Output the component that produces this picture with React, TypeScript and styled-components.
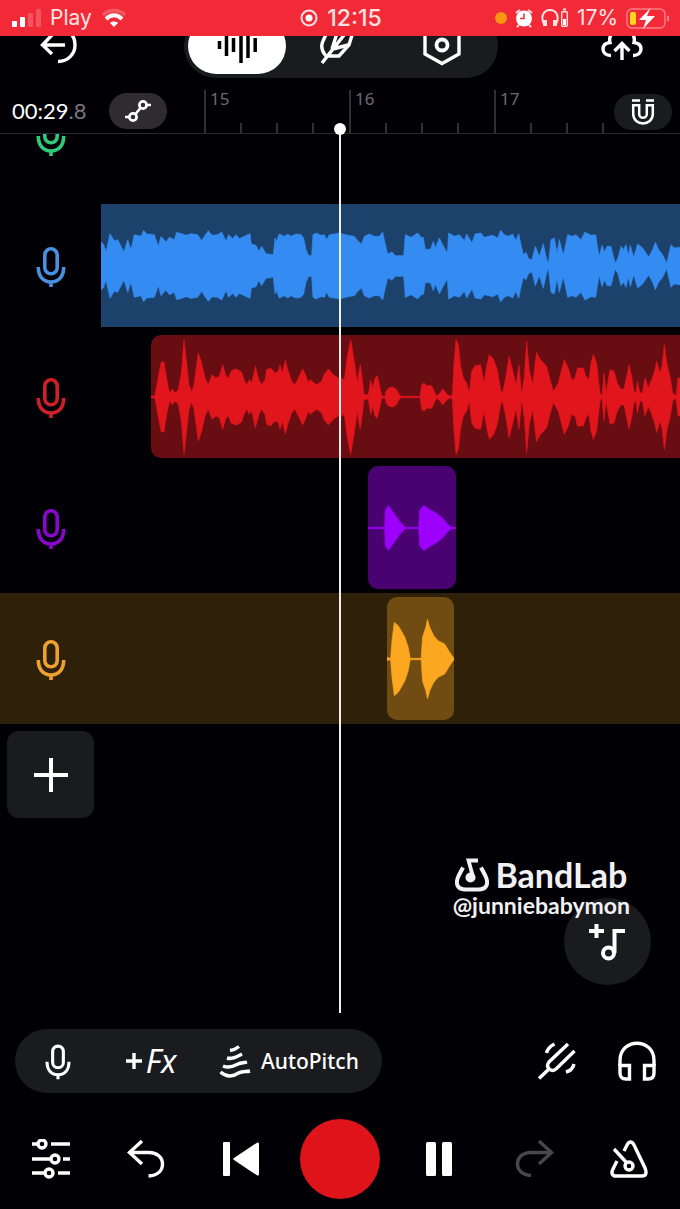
import React from "react";
import styled, { createGlobalStyle, css } from "styled-components";

const GlobalStyle = createGlobalStyle`
  *, *::before, *::after { box-sizing: border-box; }
  body { margin: 0; background: #010005; }
  button { appearance: none; border: 0; padding: 0; margin: 0; background: none; color: inherit; font: inherit; cursor: pointer; }
`;

const sans = `"Liberation Sans", Arial, sans-serif`;
const rounded = `Lato, "Open Sans", sans-serif`;

const Page = styled.main`
  display: flex;
  flex-direction: column;
  min-height: 100vh;
  background: #010005;
  color: #fff;
  font-family: ${rounded};
  overflow-x: hidden;
`;

/* ---------- status bar ---------- */

const StatusBar = styled.header`
  display: grid;
  grid-template-columns: 1fr auto 1fr;
  align-items: center;
  height: 36px;
  padding: 0 10px 0 12px;
  background: #f22a38;
  color: #ffe3e3;
  font-family: Inter, ${sans};
  font-size: 21px;
  line-height: 36px;
`;

const StatusGroup = styled.div<{ $end?: boolean; $gap: number }>`
  display: flex;
  align-items: center;
  justify-content: ${(p) => (p.$end ? "flex-end" : "flex-start")};
  gap: ${(p) => p.$gap}px;
`;

const Clock = styled.time`
  font-size: 23px;
  font-weight: 500;
`;

const Glyph = styled.svg.attrs({ strokeWidth: 3.4 })`
  display: block;
  flex: none;
  fill: none;
  stroke: currentColor;
`;

/* ---------- top navigation ---------- */

const TopBar = styled.nav`
  display: grid;
  grid-template-columns: 1fr auto 1fr;
  align-content: end;
  height: 42px;
  padding: 0 34px 0 36px;
  overflow: hidden;
`;

const ModeSwitch = styled.div`
  display: flex;
  align-items: center;
  height: 64px;
  padding: 4px;
  border-radius: 32px;
  background: #1a1b1e;
`;

const ModeButton = styled.button<{ $active?: boolean }>`
  display: grid;
  place-items: center;
  width: ${(p) => (p.$active ? 98 : 104)}px;
  height: 56px;
  border-radius: 28px;
  ${(p) => p.$active && css`background: #fff; color: #000;`}
`;

const NavButton = styled.button<{ $end?: boolean }>`
  display: grid;
  place-items: center;
  justify-self: ${(p) => (p.$end ? "end" : "start")};
  width: 48px;
  height: 64px;
`;

/* ---------- workspace ---------- */

const Workspace = styled.section`
  position: relative;
  display: flex;
  flex: 1;
  flex-direction: column;
`;

const RulerBar = styled.div`
  position: relative;
  display: flex;
  align-items: flex-end;
  height: 56px;
  border-bottom: 1px solid #2a2a2e;
  overflow: hidden;
`;

const TimePanel = styled.div`
  display: flex;
  flex: none;
  align-items: center;
  gap: 20px;
  width: 204px;
  height: 44px;
  padding-left: 12px;
`;

const TimeReadout = styled.output`
  width: 77px;
  font-size: 22px;
  line-height: 24px;
  white-space: nowrap;
`;

const Faded = styled.span`
  color: #77777c;
`;

const RoundToggle = styled.button<{ $muted?: boolean }>`
  display: grid;
  place-items: center;
  width: 58px;
  height: 36px;
  border-radius: 18px;
  background: ${(p) => (p.$muted ? "#1a1b1e" : "#2e2c30")};
`;

const SnapSlot = styled.div`
  position: absolute;
  right: 8px;
  bottom: 3px;
`;

const Bar = styled.div`
  display: flex;
  flex: none;
  justify-content: space-between;
  width: 145px;
  height: 43px;
  border-left: 2px solid #2f2f33;
  color: #6c6c71;
  font-family: "Noto Sans", sans-serif;
  font-size: 17px;
  line-height: 18px;
  padding-left: 4px;
`;

const Ticks = styled.div`
  display: grid;
  grid-template-columns: repeat(3, 2px);
  align-self: flex-end;
  gap: 34px;
  margin-right: 35px;
  height: 10px;
`;

const Tick = styled.i`
  background: #2f2f33;
`;

const BarNumber = styled.span`
  width: 0;
`;

const TrackList = styled.ul`
  margin: 0;
  padding: 0;
  list-style: none;
`;

const TrackRow = styled.li<{ $selected?: boolean; $cut?: boolean }>`
  display: flex;
  align-items: ${(p) => (p.$cut ? "flex-end" : "center")};
  height: ${(p) => (p.$cut ? 66 : 131)}px;
  overflow: hidden;
  background: ${(p) => (p.$selected ? "#2f200a" : "transparent")};
`;

const TrackHead = styled.button<{ $color: string }>`
  display: grid;
  flex: none;
  place-items: center;
  width: 101px;
  height: 131px;
  color: ${(p) => p.$color};
`;

const Lane = styled.div<{ $start: number }>`
  display: flex;
  flex: 1;
  padding-left: ${(p) => p.$start}px;
`;

const Clip = styled.div<{ $fill: string; $wave: string; $width?: number; $radius: string }>`
  flex: ${(p) => (p.$width ? `0 0 ${p.$width}px` : "1 1 0")};
  height: 123px;
  border-radius: ${(p) => p.$radius};
  background: ${(p) => p.$fill};
  color: ${(p) => p.$wave};
  overflow: hidden;
`;

const WaveDrawing = styled.svg`
  display: block;
  width: 100%;
  height: 100%;
  fill: currentColor;
  stroke: currentColor;
  stroke-width: 2;
`;

const AddTrack = styled.button`
  display: grid;
  place-items: center;
  width: 87px;
  height: 87px;
  margin: 7px;
  border-radius: 12px;
  background: #1a1b1e;
`;

const Playhead = styled.div`
  position: absolute;
  top: 51px;
  bottom: 0;
  left: 50%;
  width: 2px;
  margin-left: -1px;
  background: #f0f0f2;

  &::before {
    content: "";
    position: absolute;
    top: -6px;
    left: -5px;
    width: 12px;
    height: 12px;
    border-radius: 50%;
    background: #fff;
  }
`;

const AddLoop = styled.button`
  position: absolute;
  right: 29px;
  bottom: 28px;
  display: grid;
  place-items: center;
  width: 87px;
  height: 87px;
  border-radius: 50%;
  background: #1a1b1e;
`;

const Watermark = styled.div`
  position: absolute;
  right: 50px;
  bottom: 96px;
  display: flex;
  flex-direction: column;
  align-items: center;
  color: #f1f1f3;
`;

const Brand = styled.div`
  display: flex;
  align-items: center;
  gap: 6px;
  font-size: 34px;
  font-weight: 700;
  line-height: 36px;
`;

const Handle = styled.div`
  font-size: 23px;
  font-weight: 700;
  line-height: 24px;
`;

/* ---------- bottom controls ---------- */

const Controls = styled.footer`
  display: flex;
  flex-direction: column;
  gap: 26px;
  padding: 16px 15px 10px;
`;

const ToolRow = styled.div`
  display: flex;
  align-items: center;
  justify-content: space-between;
`;

const ToolPill = styled.div`
  display: flex;
  align-items: center;
  height: 64px;
  padding: 0 23px 0 18px;
  border-radius: 32px;
  background: #1a1b1e;
  font-family: "Noto Sans", sans-serif;
`;

const ToolButton = styled.button<{ $width?: number }>`
  display: flex;
  align-items: center;
  justify-content: center;
  gap: 10px;
  width: ${(p) => (p.$width ? `${p.$width}px` : "auto")};
  height: 64px;
  font-size: 21px;
  font-weight: 500;
  line-height: 24px;
`;

const FxText = styled.span`
  display: flex;
  align-items: center;
  gap: 4px;
  font-size: 32px;
  font-style: italic;
  font-weight: 400;
  line-height: 36px;
`;

const SideTools = styled.div`
  display: flex;
  gap: 32px;
  padding-right: 4px;
`;

const Transport = styled.div`
  display: flex;
  align-items: center;
  justify-content: space-between;
`;

const TransportButton = styled.button<{ $dim?: boolean }>`
  display: grid;
  place-items: center;
  width: 72px;
  height: 64px;
  color: ${(p) => (p.$dim ? "#48484c" : "#fff")};
`;

const IconButton = styled.button`
  display: grid;
  place-items: center;
  width: 48px;
  height: 64px;
`;

const RecordButton = styled.button`
  width: 80px;
  height: 80px;
  border-radius: 50%;
  background: #df141b;
`;

/* ---------- waveforms ---------- */

type Point = [number, number];

/* Upper outline of each clip, mirrored about the axis when drawn. */
const shift = (dx: number, points: Point[]): Point[] => points.map(([x, y]) => [x + dx, y]);

const blueWave: Point[] = [
  [35,142],[42,148],[50,172],[62,117],[75,138],[85,135],[104,172],[115,135],[125,165],[135,120],[155,125],[163,107],[172,118],[195,120],[207,155],[215,125],[230,142],[240,128],[255,135],[262,113],[280,118],[290,122],[305,117],[325,120],[337,138],[345,125],[357,108],[368,122],[385,120],[397,112],[410,140],[418,120],[430,132],[440,120],[450,132],[465,125],[482,117],[486,148],[500,152],[508,170],[517,155],[530,177],[552,180],[557,130],[560,142],[570,118],[585,125],[595,118],[605,125],[620,118],[635,120],[643,130],[650,165],[658,183],[667,183],[671,120],[680,115],[695,122],[705,120],[712,135],[720,120],[735,118],[750,115],[775,122],[795,125],[805,138],[817,148],[825,125],[840,118],[855,125],
  ...shift(870, [
    [0,125],[10,112],[16,140],[25,178],[38,172],[48,183],[73,183],[78,120],[95,128],[115,115],[128,130],[132,128],[138,165],[154,163],[162,140],[168,160],[180,130],[190,150],[204,175],[208,115],[225,125],[240,120],[255,138],[262,118],[278,145],[287,118],[305,115],[315,128],[340,122],[355,130],[364,107],[375,120],[388,125],[400,118],[410,138],[418,117],[425,150],[432,180],[440,173],[448,192],[458,195],[468,155],[480,185],[492,147],[500,185],[507,209],[515,135],[525,130],[533,175],[540,135],[552,182],[565,120],[580,125],[590,120],[605,135],[617,112],[635,122],[649,120],[655,160],[660,185],[668,152],[676,172],[683,155],[695,155],[702,185],[708,205],[716,190],[725,155],[732,165],[740,150],[747,182],[753,152],[763,188],[775,148],[790,160],[808,187],[820,165],[828,143],[838,165],[850,180],[862,206],[875,150],[885,160],[902,158],
  ] as Point[]),
];

const redWave: Point[] = [
  [33,200],[45,198],[50,170],[58,125],[64,97],[72,97],[76,125],[84,170],[90,190],[97,178],[105,190],[115,180],[124,130],[132,30],[140,100],[147,165],[155,187],[162,165],[168,120],[175,70],[185,100],[195,145],[205,165],[216,135],[228,145],[238,140],[248,105],[258,140],[265,145],[275,122],[290,118],[305,128],[312,150],[320,165],[328,150],[335,160],[346,110],[357,150],[365,165],[375,150],[380,120],[392,115],[405,130],[415,125],[420,105],[427,130],[436,92],[445,125],[455,155],[465,165],[475,145],[488,118],[498,140],[505,160],[510,150],[530,165],[545,155],[552,135],[565,118],[580,135],[595,145],[605,145],[613,150],[622,80],[632,30],[642,90],[652,160],[656,130],[661,105],[667,150],[672,194],[685,196],[692,150],[698,175],[705,145],[712,138],[718,165],[725,198],[735,200],[738,185],[746,175],[758,172],[768,178],[780,198],[785,200],
  ...shift(810, [
    [0,200],[30,200],[35,165],[42,160],[50,168],[65,168],[75,190],[80,200],[90,190],[98,178],[110,192],[120,200],[127,195],[132,100],[138,30],[145,45],[152,110],[160,145],[170,160],[178,190],[185,125],[195,108],[212,105],[222,160],[230,110],[238,75],[250,88],[262,120],[272,180],[278,190],[288,140],[297,80],[305,110],[318,165],[327,105],[335,195],[343,140],[350,35],[358,120],[368,165],[375,105],[380,68],[390,88],[410,110],[420,150],[430,185],[445,160],[455,120],[463,90],[475,115],[485,150],[495,145],[502,115],[520,115],[528,140],[537,150],[543,100],[550,75],[560,100],[570,190],[576,198],[582,130],[588,190],[595,150],[600,120],[612,125],[622,160],[632,178],[642,178],[650,140],[657,105],[665,140],[672,185],[678,190],[682,155],[690,190],[697,190],[705,145],[715,175],[725,150],[735,120],[740,95],[750,130],[756,110],[763,45],[772,110],[780,140],[788,190],[798,198],[804,145],[810,145],
  ] as Point[]),
];

const purpleWave: Point[] = [
  [54,201],[104,201],[106,148],[116,136],[125,150],[140,170],[150,185],[165,201],[206,201],[209,150],[222,135],[240,148],[262,160],[280,175],[292,190],[303,201],[318,201],
];

const orangeWave: Point[] = [
  [111,588],[114,592],[122,592],[126,540],[133,485],[145,495],[155,512],[165,530],[175,560],[181,593],[214,593],[218,530],[228,500],[233,476],[240,500],[252,525],[265,540],[285,550],[300,575],[313,593],
];

function Wave({ points, axis }: { points: Point[]; axis: number }) {
  const left = points[0][0];
  const width = points[points.length - 1][0] - left;
  const mid = 186;
  const top = points.map(([x, y]) => `${x - left} ${mid - (axis - y)}`);
  const bottom = [...points].reverse().map(([x, y]) => `${x - left} ${mid + (axis - y)}`);
  return (
    <WaveDrawing viewBox={`0 0 ${width} 369`} preserveAspectRatio="none" aria-hidden="true">
      <path d={`M${top.join("L")}L${bottom.join("L")}Z`} />
    </WaveDrawing>
  );
}

interface Track {
  name: string;
  color: string;
  selected?: boolean;
  clip?: { start: number; width?: number; fill: string; wave: string; radius: string; points: Point[]; axis: number };
}

const tracks: Track[] = [
  { name: "Green voice track", color: "#2fca7c" },
  {
    name: "Blue voice track",
    color: "#4a90e0",
    clip: { start: 0, fill: "#1c426c", wave: "#348cf3", radius: "0", points: blueWave, axis: 214 },
  },
  {
    name: "Red voice track",
    color: "#cf1f29",
    clip: { start: 50, fill: "#680d11", wave: "#e1151c", radius: "10px 0 0 10px", points: redWave, axis: 202 },
  },
  {
    name: "Purple voice track",
    color: "#8a06cf",
    clip: { start: 267, width: 88, fill: "#4a0172", wave: "#9d00fb", radius: "10px", points: purpleWave, axis: 203 },
  },
  {
    name: "Orange voice track",
    color: "#eda12e",
    selected: true,
    clip: { start: 286, width: 67, fill: "#714c12", wave: "#fba71f", radius: "10px", points: orangeWave, axis: 595 },
  },
];

/* ---------- icons ---------- */

const MicIcon = ({ width = 30, height = 44 }: { width?: number; height?: number }) => (
  <Glyph width={width} height={height} viewBox="0 0 30 44">
    <g strokeWidth="3.6">
      <rect x="8.800" y="4.800" width="12.400" height="25" rx="6.200" />
      <path d="M2.300 23c0 9 4.700 15 12.700 15s12.700-6 12.700-15M15 38v5" />
    </g>
  </Glyph>
);

const UndoIcon = () => (
  <Glyph width="40" height="40" viewBox="0 0 40 40">
    <path d="M16 2 3.500 13.500 16 25" />
    <path d="M4 13.500h19c8 0 13.500 5 13.500 11.500 0 7-5.500 11.500-14 12" />
  </Glyph>
);

const SlidersIcon = () => (
  <Glyph width="38" height="40" viewBox="0 0 38 40">
    <path d="M0 5h5M19 5h19M0 20h18M31 20h7M0 34h12M26 34h12" />
    <circle cx="10" cy="5" r="4" />
    <circle cx="23" cy="20" r="4" />
    <circle cx="17" cy="34" r="4" />
  </Glyph>
);

export default function App() {
  return (
    <Page>
      <GlobalStyle />

      <StatusBar>
        <StatusGroup $gap={8}>
          <Glyph width="30" height="20" viewBox="0 0 30 20">
            <g fill="#fff" stroke="none">
              <rect x="0" y="13" width="5" height="6" rx="1" />
              <rect x="8" y="9" width="5" height="10" rx="1" />
              <rect x="16" y="5" width="5" height="14" rx="1" opacity=".2" />
              <rect x="24" y="1" width="5" height="18" rx="1" opacity=".2" />
            </g>
          </Glyph>
          <span>Play</span>
          <Glyph width="28" height="20" viewBox="0 0 28 20">
            <path d="M3 7C9 1 19 1 25 7" opacity=".25" />
            <path d="M6 11c5-5 11-5 16 0" stroke="#fff" strokeWidth="4" />
            <path d="m14 19-4-4c2-2 6-2 8 0z" fill="#fff" stroke="none" />
          </Glyph>
        </StatusGroup>
        <StatusGroup $gap={9}>
          <Glyph width="18" height="18" viewBox="0 0 18 18">
            <circle cx="9" cy="9" r="7.500" strokeWidth="2" />
            <circle cx="9" cy="9" r="3.500" fill="#fff" stroke="none" />
          </Glyph>
          <Clock>12:15</Clock>
        </StatusGroup>
        <StatusGroup $gap={8} $end>
          <Glyph width="12" height="12" viewBox="0 0 12 12">
            <circle cx="6" cy="6" r="6" fill="#fb9613" stroke="none" />
          </Glyph>
          <Glyph width="18" height="20" viewBox="0 0 18 20">
            <path d="M1 5l4-3M17 5l-4-3M4 17l-2 2M14 17l2 2" strokeWidth="2" />
            <circle cx="9" cy="10.500" r="8" fill="#fff" stroke="none" />
            <path d="M9 5.500v5H5" stroke="#f22a38" strokeWidth="1.500" />
          </Glyph>
          <Glyph width="28" height="20" viewBox="0 0 28 20">
            <path d="M3 16C-1 8 3 2 9 2s10 6 6 14" strokeWidth="2" />
            <path d="M4 12v6M14 12v6" strokeWidth="4" />
            <rect x="20.700" y="3.700" width="5.600" height="14.600" rx="1" strokeWidth="1.400" />
            <path d="M22 1.500h3" strokeWidth="2" />
            <rect x="22" y="11" width="3" height="6" fill="#fff" stroke="none" />
          </Glyph>
          <span>17%</span>
          <Glyph width="44" height="24" viewBox="0 0 44 24">
            <rect x="1" y="3" width="38" height="19" rx="5" strokeWidth="1.500" opacity=".45" />
            <path d="M42 10v5" strokeWidth="2" opacity=".45" />
            <rect x="4" y="6" width="6" height="13" rx="2" fill="#fcd51d" stroke="none" />
            <path d="M24.500 2 13 14h7l-3 9 12-13h-8z" fill="#fff" stroke="none" />
          </Glyph>
        </StatusGroup>
      </StatusBar>

      <TopBar aria-label="Editor">
        <NavButton aria-label="Back">
          <Glyph width="40" height="40" viewBox="0 0 40 40">
            <path d="M25 19H2M12 9 2.500 19l9.500 9" />
            <path d="M7 6C18-1 35 3 35 19c0 9-7 16.500-17 16.500" />
          </Glyph>
        </NavButton>
        <ModeSwitch>
          <ModeButton $active aria-label="Arrange">
            <Glyph width="40" height="40" viewBox="0 0 40 40">
              <path d="M2.500 15v8M9.500 8v22M16.500 12v14M24 1v36M31 7v25M38.200 12v14" strokeWidth="3.500" />
            </Glyph>
          </ModeButton>
          <ModeButton aria-label="Lyrics">
            <Glyph width="36" height="36" viewBox="0 0 36 36">
              <path d="M2 35 28 2M6 28C1 22 1 17 3 13L9 0M7 28h12l10-11L33 4M13 21l15-4M12 21l6-19" />
            </Glyph>
          </ModeButton>
          <ModeButton aria-label="Settings">
            <Glyph width="40" height="40" viewBox="0 0 40 40">
              <path d="M20 0 37 9v19l-17 9.500L3 28V9z" />
              <circle cx="20" cy="19" r="5.500" strokeWidth="3.800" />
            </Glyph>
          </ModeButton>
        </ModeSwitch>
        <NavButton $end aria-label="Save to cloud">
          <Glyph width="42" height="36" viewBox="0 0 42 36">
            <path d="M21 32V16M13.500 23l7.500-7.500 7.500 7.500" />
            <path d="M10 27.500C5 27.500 2 25 2 21s3-6 7-6.500C7 6 14 2 21 2s14 4 12 12.500c4 .5 7 2.500 7 6.500s-3 6.500-8 6.500" />
          </Glyph>
        </NavButton>
      </TopBar>

      <Workspace>
        <RulerBar>
          <TimePanel>
            <TimeReadout>
              00:29<Faded>.8</Faded>
            </TimeReadout>
            <RoundToggle aria-label="Automation">
              <Glyph width="28" height="22" viewBox="0 0 28 22">
                <g strokeWidth="2.700">
                  <circle cx="19" cy="5" r="3.600" />
                  <circle cx="9" cy="17" r="3.600" />
                  <path d="M11.500 14 16.500 8M1 17h4M23 5h4" />
                </g>
              </Glyph>
            </RoundToggle>
          </TimePanel>
          {[15, 16, 17].map((n) => (
            <Bar key={n}>
              <BarNumber>{n}</BarNumber>
              <Ticks>
                <Tick />
                <Tick />
                <Tick />
              </Ticks>
            </Bar>
          ))}
          <SnapSlot>
            <RoundToggle $muted aria-label="Snap to grid">
              <Glyph width="26" height="28" viewBox="0 0 26 28">
                <g strokeWidth="2.500">
                  <path d="M2 2.500h8M16 2.500h8" />
                  <path d="M3.200 7.200h6V16c0 5 7.600 5 7.600 0V7.200h6V16c0 12.500-19.600 12.500-19.600 0z" />
                </g>
              </Glyph>
            </RoundToggle>
          </SnapSlot>
        </RulerBar>

        <TrackList>
          {tracks.map((t) => (
            <TrackRow key={t.name} $selected={t.selected} $cut={!t.clip}>
              <TrackHead $color={t.color} aria-label={t.name}>
                <MicIcon />
              </TrackHead>
              {t.clip && (
                <Lane $start={t.clip.start}>
                  <Clip $fill={t.clip.fill} $wave={t.clip.wave} $width={t.clip.width} $radius={t.clip.radius}>
                    <Wave points={t.clip.points} axis={t.clip.axis} />
                  </Clip>
                </Lane>
              )}
            </TrackRow>
          ))}
        </TrackList>

        <AddTrack aria-label="Add track">
          <Glyph width="34" height="34" viewBox="0 0 34 34">
            <path d="M17 0v34M0 17h34" strokeWidth="4" />
          </Glyph>
        </AddTrack>

        <Playhead />

        <AddLoop aria-label="Add loop">
          <Glyph width="40" height="40" viewBox="0 0 40 40">
            <path d="M1 9h15M8.500 2v14" strokeWidth="4" />
            <path d="M37 9H26.500v22" strokeWidth="4" />
            <circle cx="20.500" cy="31" r="5.500" strokeWidth="4" />
          </Glyph>
        </AddLoop>

        <Watermark>
          <Brand>
            <Glyph width="34" height="34" viewBox="0 0 34 34">
              <path d="M8 9.500 3.500 18c-4 9 0 13.500 7 13.500h13c7 0 11-4.500 7-13.500L26 9.500" strokeWidth="4" />
              <circle cx="15.500" cy="19.500" r="5" fill="currentColor" stroke="none" />
              <path d="M18.500 20.500 13.500 2.500h9.500" strokeWidth="3.800" />
            </Glyph>
            <span>BandLab</span>
          </Brand>
          <Handle>@junniebabymon</Handle>
        </Watermark>
      </Workspace>

      <Controls>
        <ToolRow>
          <ToolPill>
            <ToolButton $width={50} aria-label="Input">
              <MicIcon width={26} height={38} />
            </ToolButton>
            <ToolButton $width={136}>
              <FxText>
                <Glyph width="16" height="16" viewBox="0 0 16 16">
                  <path d="M8 0v16M0 8h16" />
                </Glyph>
                Fx
              </FxText>
            </ToolButton>
            <ToolButton>
              <Glyph width="32" height="34" viewBox="0 0 32 34">
                <path d="M11 6.500c3-.5 6-1.500 9-4M8 14c5 1.500 9-1 15-4M4 22c7 3 12-.5 15-2 3-1.500 6-1 9-2M1.500 28c8 7 15 3 18 1 4-2 8-1 11.500-2" />
              </Glyph>
              AutoPitch
            </ToolButton>
          </ToolPill>
          <SideTools>
            <IconButton aria-label="Tuner">
              <Glyph width="40" height="40" viewBox="0 0 40 40">
                <path d="M2 37.500 12 28M31 3 12 21c-4 5 2 11 7 7L37.500 10" />
                <path d="M9.500 12c1-4 4-7 8-9M29 31c4-1 7-4 8-8" />
              </Glyph>
            </IconButton>
            <IconButton aria-label="Monitoring">
              <Glyph width="38" height="40" viewBox="0 0 38 40">
                <path d="M2 25v-5.500C2-3.500 36-3.500 36 19.500V25" />
                <path d="M2 24.500h9.500V38H8c-4 0-6-2-6-6zM36 24.500h-9.500V38H30c4 0 6-2 6-6z" />
              </Glyph>
            </IconButton>
          </SideTools>
        </ToolRow>

        <Transport>
          <TransportButton aria-label="Mixer">
            <SlidersIcon />
          </TransportButton>
          <TransportButton aria-label="Undo">
            <UndoIcon />
          </TransportButton>
          <TransportButton aria-label="Back to start">
            <Glyph width="38" height="34" viewBox="0 0 38 34">
              <g fill="currentColor" stroke="none">
                <rect x="1" y="0" width="7" height="34" rx="1" />
                <path d="M37 2v30c0 1.500-1 2-2 1.300L12 18c-1-.700-1-1.300 0-2L35 .700c1-.700 2-.2 2 1.300z" />
              </g>
            </Glyph>
          </TransportButton>
          <RecordButton aria-label="Record" />
          <TransportButton aria-label="Pause">
            <Glyph width="26" height="34" viewBox="0 0 26 34">
              <g fill="currentColor" stroke="none">
                <rect x="0" y="0" width="10" height="34" rx="1.500" />
                <rect x="16" y="0" width="10" height="34" rx="1.500" />
              </g>
            </Glyph>
          </TransportButton>
          <TransportButton $dim aria-label="Redo">
            <Glyph width="40" height="40" viewBox="0 0 40 40">
              <path d="m25 2 12.500 11.500L25 25" />
              <path d="M37 13.500H17C9 13.500 3.500 18 3.500 25c0 6 4.500 11 13.500 11.500" />
            </Glyph>
          </TransportButton>
          <TransportButton aria-label="Metronome">
            <Glyph width="38" height="38" viewBox="0 0 38 38">
              <path d="m14 11 3-6c2-4 5-4 7 0l11 23c2 5 1 8-3 8H6c-4 0-5-3-3-7l4-8" />
              <path d="m4 9 12 13" />
              <circle cx="19" cy="26" r="4" />
            </Glyph>
          </TransportButton>
        </Transport>
      </Controls>
    </Page>
  );
}
